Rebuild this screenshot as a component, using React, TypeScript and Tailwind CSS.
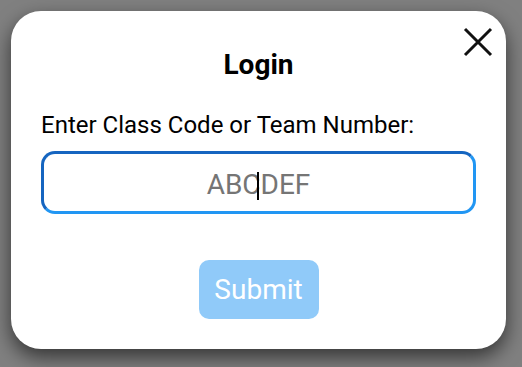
export default function App() {
  return (
    <div className="h-screen w-full bg-[#808080] pl-[11px] pt-[11px] font-['Roboto',sans-serif]">
      <div className="relative flex w-[495px] flex-col rounded-[30px] bg-white px-[30px] pb-[30px] pt-[37px] shadow-[0_8px_20px_rgba(0,0,0,0.6)]">
        {/* close */}
        <button className="absolute right-[12px] top-[15px] flex h-[32px] w-[32px] items-center justify-center" aria-label="Close">
          <svg width="30" height="30" viewBox="0 0 30 30">
            <path d="M2 2 L28 28 M28 2 L2 28" stroke="#111" strokeWidth="3" strokeLinecap="butt" />
          </svg>
        </button>

        <h2 className="text-center text-[28px] font-bold leading-[33px] text-black">Login</h2>

        <label className="mt-[30px] text-[24px] leading-[28px] text-black">
          Enter Class Code or Team Number:
        </label>

        <div className="relative mt-[12px]">
          <input
            type="text"
            placeholder="ABCDEF"
            className="h-[63px] w-full rounded-[14px] border-[3px] border-b-[#2196f3] border-l-[#1565c0] border-r-[#2196f3] border-t-[#1565c0] bg-white pt-[4px] text-center text-[28px] text-black outline-none placeholder:text-[#757575]"
          />
          <span className="absolute left-[216px] top-[21px] h-[28px] w-[2px] bg-black" aria-hidden="true" />
        </div>

        <button className="mx-auto mt-[46px] flex h-[59px] w-[120px] items-center justify-center rounded-[10px] bg-[#90caf9] text-[28px] text-white">
          Submit
        </button>
      </div>
    </div>
  );
}
